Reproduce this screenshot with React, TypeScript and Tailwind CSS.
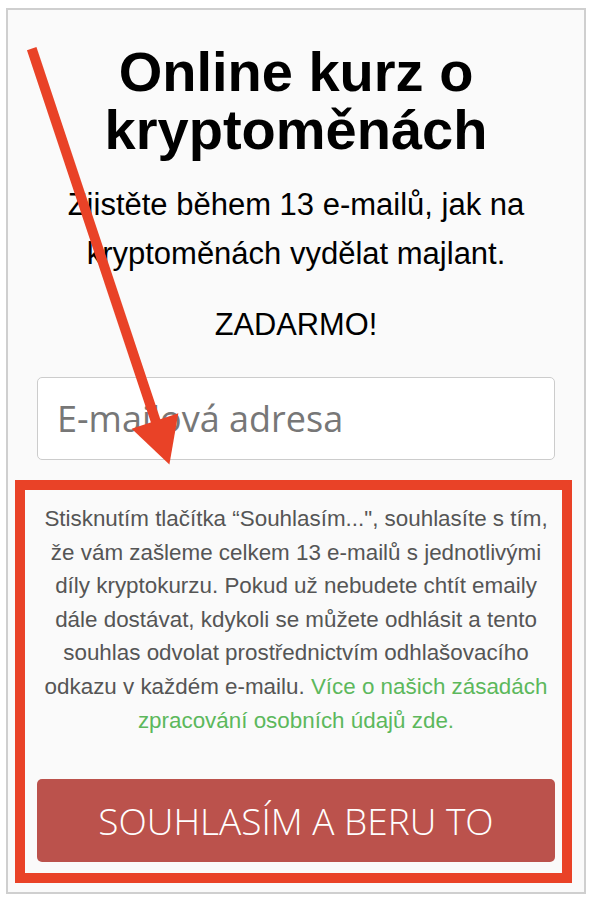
import React from "react";

export default function App() {
  return (
    <div className="relative w-[594px] h-[902px] bg-white overflow-hidden">
      <div className="ml-[6px] mt-[8px] w-[580px] h-[886px] border-2 border-[#cfcfcf] bg-[#fafafa] px-[29px] pt-[33px] flex flex-col items-center text-center">
        <h1 className="font-['Liberation_Sans',Arial,sans-serif] font-bold text-[56px] leading-[58px] text-black">
          Online kurz o<br />kryptoměnách
        </h1>
        <p className="mt-[21px] font-['Liberation_Sans',Arial,sans-serif] text-[31px] leading-[49px] text-black">
          Zjistěte během 13 e-mailů, jak na<br />kryptoměnách vydělat majlant.
        </p>
        <p className="mt-[22px] font-['Liberation_Sans',Arial,sans-serif] text-[30.8px] leading-[49px] text-black">
          ZADARMO!
        </p>
        <input
          type="email"
          placeholder="E-mailová adresa"
          className="mt-[28px] w-full h-[83px] rounded-[5px] border border-[#cccccc] bg-white px-[19px] font-['Open_Sans',sans-serif] text-[36px] text-[#555] placeholder:text-[#777] outline-none"
        />
        <p className="mt-[42px] w-full font-['Liberation_Sans',Arial,sans-serif] text-[22.4px] leading-[33.6px] text-[#555]">
          Stisknutím tlačítka “Souhlasím...", souhlasíte s tím,<br />
          že vám zašleme celkem 13 e-mailů s jednotlivými<br />
          díly kryptokurzu. Pokud už nebudete chtít emaily<br />
          dále dostávat, kdykoli se můžete odhlásit a tento<br />
          souhlas odvolat prostřednictvím odhlašovacího<br />
          odkazu v každém e-mailu.{" "}
          <a className="text-[#5cb85c]">
            Více o našich zásadách<br />zpracování osobních údajů zde.
          </a>
        </p>
        <button className="mt-[42px] w-full h-[83px] rounded-[5px] bg-[#bb524c] text-white font-['Open_Sans',sans-serif] font-light text-[37px] uppercase">
          Souhlasím a beru to
        </button>
      </div>

      {/* annotation overlay */}
      <div className="absolute left-[15px] top-[480px] w-[557px] h-[403px] border-[10px] border-[#e94227] pointer-events-none" />
      <svg className="absolute left-0 top-0 pointer-events-none" width="594" height="902" viewBox="0 0 594 902">
        <line x1="31.7" y1="48.7" x2="157" y2="425" stroke="#e94227" strokeWidth="10" />
        <polygon points="169.4,464.6 178.3,413.3 131.7,428.7" fill="#e94227" />
      </svg>
    </div>
  );
}
